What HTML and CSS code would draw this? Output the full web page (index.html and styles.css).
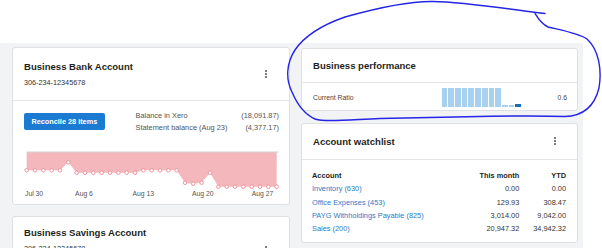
FILE: index.html
```html
<!DOCTYPE html>
<html>
<head>
<meta charset="utf-8">
<link rel="stylesheet" href="styles.css">
</head>
<body>
<div class="page">
  <div class="topbar"></div>
  <div class="dash">
    <div class="col col-left">
      <section class="card card-bank">
        <header class="card-head">
          <div class="head-text">
            <h2 class="card-title">Business Bank Account</h2>
            <div class="acct-no">306-234-12345678</div>
          </div>
          <span class="kebab"><i></i><i></i><i></i></span>
        </header>
        <div class="bank-body">
          <div class="bank-top">
            <button class="btn-reconcile">Reconcile 28 items</button>
            <div class="balances">
              <span>Balance in Xero</span><span class="num">(18,091.87)</span>
              <span>Statement balance (Aug 23)</span><span class="num">(4,377.17)</span>
            </div>
          </div>
          <svg class="bank-chart" width="256" height="48" viewBox="0 0 256 48">
            <polygon class="area" points="2.67,1 252.67,1 252.67,35.7 244.33,35.7 236,35.7 227.67,35.7 219.33,35.7 211,35.7 202.67,35.7 194.33,35.7 186,21.7 177.67,31.7 169.33,32.7 161,31.7 152.67,19.3 144.33,19.3 136,19.3 127.67,19.3 119.33,19.3 111,21.7 102.67,21.7 94.33,21.7 86,21.7 77.67,21.7 69.33,21.7 61,21.7 52.67,21.7 44.33,11.3 36,19.3 27.67,19.3 19.33,19.3 11,19.3 2.67,19.3"/>
            <line class="topline" x1="2.67" y1="1" x2="254.7" y2="1"/>
            <g class="pts">
              <circle cx="2.67" cy="19.3" r="1.8"/><circle cx="11" cy="19.3" r="1.8"/><circle cx="19.33" cy="19.3" r="1.8"/><circle cx="27.67" cy="19.3" r="1.8"/><circle cx="36" cy="19.3" r="1.8"/>
              <circle cx="44.33" cy="11.3" r="1.8"/>
              <circle cx="52.67" cy="21.7" r="1.8"/><circle cx="61" cy="21.7" r="1.8"/><circle cx="69.33" cy="21.7" r="1.8"/><circle cx="77.67" cy="21.7" r="1.8"/><circle cx="86" cy="21.7" r="1.8"/><circle cx="94.33" cy="21.7" r="1.8"/><circle cx="102.67" cy="21.7" r="1.8"/><circle cx="111" cy="21.7" r="1.8"/>
              <circle cx="119.33" cy="19.3" r="1.8"/><circle cx="127.67" cy="19.3" r="1.8"/><circle cx="136" cy="19.3" r="1.8"/><circle cx="144.33" cy="19.3" r="1.8"/><circle cx="152.67" cy="19.3" r="1.8"/>
              <circle cx="161" cy="31.7" r="1.8"/><circle cx="169.33" cy="32.7" r="1.8"/><circle cx="177.67" cy="31.7" r="1.8"/>
              <circle cx="186" cy="21.7" r="1.8"/>
              <circle cx="194.33" cy="35.7" r="1.8"/><circle cx="202.67" cy="35.7" r="1.8"/><circle cx="211" cy="35.7" r="1.8"/><circle cx="219.33" cy="35.7" r="1.8"/><circle cx="227.67" cy="35.7" r="1.8"/><circle cx="236" cy="35.7" r="1.8"/><circle cx="244.33" cy="35.7" r="1.8"/><circle cx="252.67" cy="35.7" r="1.8"/>
            </g>
            <g class="labels">
              <text x="1" y="44.7">Jul 30</text>
              <text x="60" y="44.7" text-anchor="middle">Aug 6</text>
              <text x="119.3" y="44.7" text-anchor="middle">Aug 13</text>
              <text x="178.8" y="44.7" text-anchor="middle">Aug 20</text>
              <text x="238.5" y="44.7" text-anchor="middle">Aug 27</text>
            </g>
          </svg>
        </div>
      </section>
      <section class="card card-savings">
        <header class="card-head">
          <div class="head-text">
            <h2 class="card-title">Business Savings Account</h2>
            <div class="acct-no">306-234-12345678</div>
          </div>
          <span class="kebab"><i></i><i></i><i></i></span>
        </header>
      </section>
    </div>
    <div class="col col-right">
      <section class="card card-perf">
        <header class="card-head head-simple">
          <h2 class="card-title">Business performance</h2>
        </header>
        <div class="perf-row">
          <span class="perf-label">Current Ratio</span>
          <div class="bars">
            <i class="bar tall"></i><i class="bar tall"></i><i class="bar tall"></i><i class="bar tall"></i><i class="bar tall"></i><i class="bar tall"></i><i class="bar tall"></i><i class="bar tall"></i><i class="bar tall"></i>
            <i class="bar low"></i><i class="bar low"></i><i class="bar low current"></i>
          </div>
          <span class="perf-value">0.6</span>
        </div>
      </section>
      <section class="card card-watch">
        <header class="card-head head-simple">
          <h2 class="card-title">Account watchlist</h2>
          <span class="kebab"><i></i><i></i><i></i></span>
        </header>
        <table class="watch">
          <thead>
            <tr><th class="c-acc">Account</th><th class="c-num">This month</th><th class="c-num c-ytd">YTD</th></tr>
          </thead>
          <tbody>
            <tr><td><a href="#">Inventory (630)</a></td><td class="c-num">0.00</td><td class="c-num">0.00</td></tr>
            <tr><td><a href="#">Office Expenses (453)</a></td><td class="c-num">129.93</td><td class="c-num">308.47</td></tr>
            <tr><td><a href="#">PAYG Withholdings Payable (825)</a></td><td class="c-num">3,014.00</td><td class="c-num">9,042.00</td></tr>
            <tr><td><a href="#">Sales (200)</a></td><td class="c-num">20,947.32</td><td class="c-num">34,942.32</td></tr>
          </tbody>
        </table>
      </section>
    </div>
  </div>
  <svg class="scribble" width="602" height="248" viewBox="0 0 602 248">
    <path d="M 545 13.5 C 515 10, 465 2, 433 1.5 C 405 1, 370 10, 345 17 C 325 24, 305 35, 295 50 C 287 62, 285 78, 292 92 C 297 104, 304 114, 315 119 C 325 122, 345 120, 380 118.5 L 467 116.7 C 500 116, 540 115.5, 565 116.5 C 585 116, 595 104, 599 88 C 602 70, 599 50, 587 39 C 578 33, 560 30, 548 27 C 540 23, 538 18, 535 13.3"/>
  </svg>
</div>
</body>
</html>
```
FILE: styles.css
```css
* { box-sizing: border-box; }
html, body { margin: 0; padding: 0; background: #ffffff; }
body {
  font-family: "Liberation Sans", Arial, sans-serif;
  color: #333;
  width: 602px;
  height: 248px;
  overflow: hidden;
}
.page { position: relative; width: 602px; height: 248px; overflow: hidden; }
.topbar { height: 43px; background: #fff; }
.dash {
  width: 583px;
  height: 205px;
  background: #f2f3f5;
  padding: 4px 0 0 12px;
  display: grid;
  grid-template-columns: 278px 277px;
  column-gap: 11px;
  align-items: start;
  overflow: hidden;
}
.col { display: flex; flex-direction: column; gap: 11px; }
.col-left { gap: 11px; }
.col-right { padding-top: 1px; gap: 12px; }

.card {
  background: #fff;
  border: 1px solid #dfe0e4;
  border-radius: 3px;
}
.card-head {
  display: flex;
  align-items: center;
  justify-content: space-between;
  border-bottom: 1px solid #e3e4e7;
}
.card-bank .card-head, .card-savings .card-head { height: 53px; padding: 0 22px 0 11px; }
.card-title {
  margin: 0;
  font-size: 9.55px;
  line-height: 12px;
  font-weight: 700;
  color: #1e1f21;
}
.acct-no {
  margin-top: 5px;
  font-size: 7.25px;
  line-height: 10px;
  color: #333;
}
.kebab { display: flex; flex-direction: column; gap: 1.2px; width: 2px; }
.kebab i { display: block; width: 1.8px; height: 1.8px; border-radius: 50%; background: #555; }

.card-bank { height: 158px; }
.bank-body { padding: 9px 10px 0 11px; }
.bank-top { display: flex; justify-content: space-between; align-items: flex-start; }
.btn-reconcile {
  margin-top: 2.7px;
  height: 17.3px;
  width: 80.7px;
  padding: 0;
  border: 0;
  border-radius: 2px;
  background: #1b7bd3;
  color: #fff;
  font-family: "Liberation Sans", Arial, sans-serif;
  font-size: 7.3px;
  font-weight: 700;
  line-height: 17.3px;
  text-align: center;
}
.balances {
  width: 143.5px;
  display: grid;
  grid-template-columns: auto auto;
  justify-content: space-between;
  font-size: 7.38px;
  line-height: 12.3px;
  color: #555;
}
.balances .num { text-align: right; }
.bank-chart { display: block; margin-top: 16.4px; }
.bank-chart .area { fill: #f4b7bc; }
.bank-chart .topline { stroke: #cfd1d5; stroke-width: 1; }
.bank-chart .pts circle { fill: #fff; stroke: #ee8a93; stroke-width: 0.9; }
.bank-chart .labels text { font-family: "Liberation Sans", Arial, sans-serif; font-size: 6.8px; fill: #555; }

.card-savings { height: 60px; }
.card-savings .card-head { height: 36px; border-bottom: 0; align-items: flex-start; padding-top: 10px; }
.card-savings .kebab { margin-top: 19px; }

.card-perf { height: 63px; }
.head-simple { padding: 0 21px 0 11px; height: 34px; }
.perf-row {
  display: flex;
  align-items: center;
  height: 28px;
  padding: 0 10px 0 11px;
  font-size: 6.8px;
  color: #444;
}
.perf-label { width: 128.7px; }
.bars { display: flex; align-items: flex-end; gap: 1px; height: 18.4px; margin-top: 1px; }
.bar { display: block; width: 5.7px; background: #a8d0ef; }
.bar.tall { height: 18.4px; }
.bar.low { height: 2.2px; }
.bar.current { background: #1d6db5; height: 2.6px; }
.perf-value { margin-left: auto; }

.card-watch { height: 120px; }
.card-watch .head-simple { height: 36px; }
.card-watch .kebab { margin-top: -1px; }
.watch {
  margin: 9px 11px 0 10px;
  width: calc(100% - 21px);
  border-collapse: collapse;
  font-size: 7.38px;
  color: #333;
}
.watch th, .watch td { padding: 0; height: 13.25px; line-height: 13.25px; white-space: nowrap; }
.watch th { font-weight: 700; color: #1e1f21; text-align: left; }
.watch .c-num { text-align: right; }
.watch .c-ytd { width: 46.7px; }
.watch td.c-num:last-child { width: 46.7px; }
.watch a { color: #2a7bc9; text-decoration: none; }

.scribble { position: absolute; left: 0; top: 0; pointer-events: none; }
.scribble path { fill: none; stroke: #2424e6; stroke-width: 1.4; stroke-linecap: round; stroke-linejoin: round; }
```
